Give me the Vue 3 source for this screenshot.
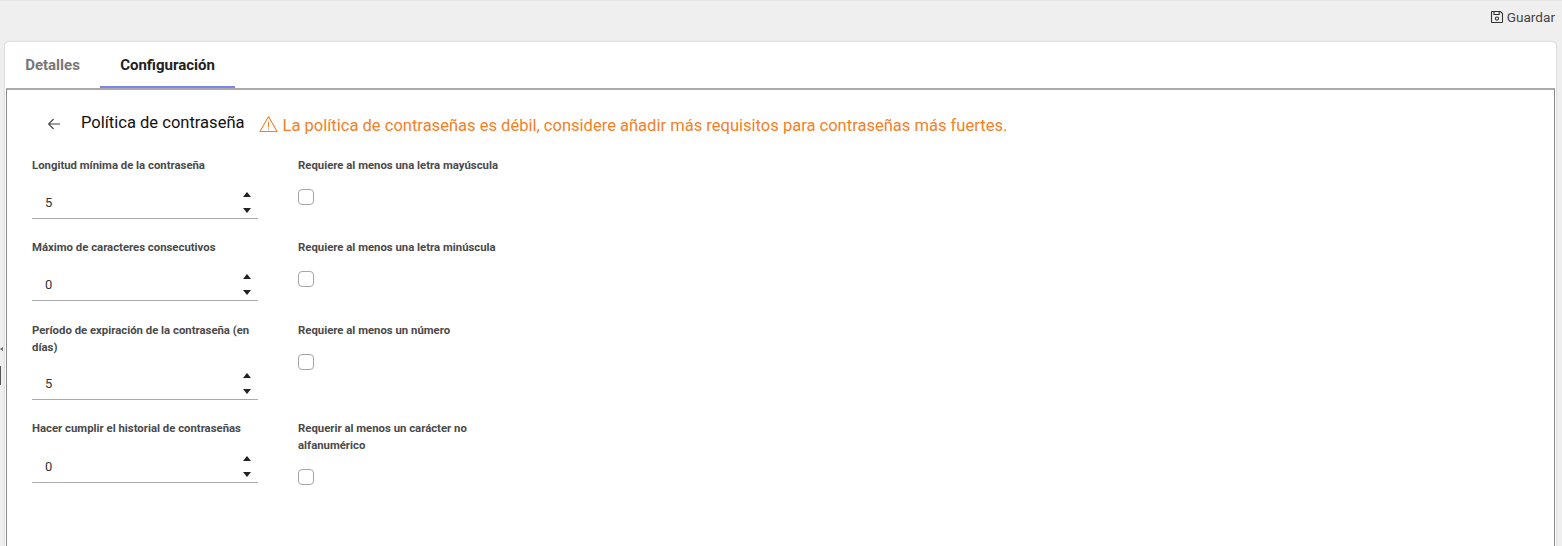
<script setup>
const numberFields = [
  { label: "Longitud mínima de la contraseña", value: 5 },
  { label: "Máximo de caracteres consecutivos", value: 0 },
  { label: "Período de expiración de la contraseña (en días)", value: 5 },
  { label: "Hacer cumplir el historial de contraseñas", value: 0 },
];

const checks = [
  "Requiere al menos una letra mayúscula",
  "Requiere al menos una letra minúscula",
  "Requiere al menos un número",
  "Requerir al menos un carácter no alfanumérico",
];
</script>

<template>
  <div class="page">
    <header class="topbar">
      <button class="save-btn" type="button">
        <svg class="save-icon" viewBox="0 0 14 14" width="14" height="14" fill="none" stroke="currentColor" stroke-width="1.1">
          <path d="M1.5 2.2a.7.7 0 0 1 .7-.7h8.2l2.1 2.1v8.2a.7.7 0 0 1-.7.7H2.2a.7.7 0 0 1-.7-.7z" />
          <path d="M4 1.7v2.8h5.2V1.7" />
          <circle cx="7" cy="8.6" r="1.6" />
        </svg>
        <span>Guardar</span>
      </button>
    </header>

    <section class="card">
      <nav class="tabs">
        <a class="tab">Detalles</a>
        <a class="tab active">Configuración</a>
      </nav>

      <div class="panel">
        <div class="title-row">
          <svg class="back" viewBox="0 0 14 14" width="14" height="14" fill="none" stroke="#444" stroke-width="1.1">
            <path d="M13 7H1.6M6.6 2 1.6 7l5 5" />
          </svg>
          <h2>Política de contraseña</h2>
          <svg class="warn" viewBox="0 0 20 18" width="19" height="18" fill="none" stroke="#f47f26" stroke-width="1.1" stroke-linejoin="round">
            <path d="M10 1.2 19 16.8H1z" />
            <path d="M10 6.5v6M10 13.8v1.2" />
          </svg>
          <span class="warning">La política de contraseñas es débil, considere añadir más requisitos para contraseñas más fuertes.</span>
        </div>

        <div class="form-grid">
          <template v-for="(field, i) in numberFields" :key="field.label">
            <div class="field">
              <label>{{ field.label }}</label>
              <div class="number-input" :class="{ last: i === 3 }">
                <span class="value">{{ field.value }}</span>
                <span class="spinner">
                  <i class="up" />
                  <i class="down" />
                </span>
              </div>
            </div>
            <div class="field">
              <label>{{ checks[i] }}</label>
              <span class="checkbox" />
            </div>
          </template>
        </div>
      </div>
    </section>

    <div class="side-handle">
      <i class="chev" />
      <i class="bar" />
    </div>
  </div>
</template>

<style scoped>
.page {
  position: relative;
  width: 1562px;
  height: 546px;
  overflow: hidden;
  background: #efefef;
  font-family: Roboto, "Liberation Sans", sans-serif;
  color: #222;
}

.topbar {
  height: 42px;
  box-sizing: border-box;
  display: flex;
  justify-content: flex-end;
  align-items: flex-start;
  padding: 9px 7px 0 0;
  border-top: 1px solid #e6e6e6;
}

.save-btn {
  display: flex;
  align-items: center;
  gap: 3px;
  height: 13px;
  padding: 0;
  border: none;
  background: none;
  color: #444;
  font-family: inherit;
  font-size: 13.6px;
}

.save-icon {
  color: #333;
}

.card {
  height: 504px;
  margin: 0 6px 0 5px;
  box-sizing: border-box;
  background: #fff;
  border-radius: 4px 4px 0 0;
  box-shadow: 0 0 2px rgba(0, 0, 0, 0.25);
}

.tabs {
  height: 46px;
  display: flex;
}

.tab {
  width: 95px;
  height: 46px;
  box-sizing: border-box;
  display: flex;
  align-items: center;
  justify-content: center;
  font-size: 15px;
  font-weight: 700;
  color: #777;
}

.tab.active {
  width: 135px;
  padding-top: 2px;
  color: #222;
  border-bottom: 2px solid #7a86e8;
}

.panel {
  height: 458px;
  box-sizing: border-box;
  margin: 0 1px;
  padding: 0 25px;
  border: 1px solid #8a8a8a;
  border-top: 2px solid #aaa;
  border-bottom: none;
}

.title-row {
  height: 67px;
  display: flex;
  align-items: flex-start;
  padding-top: 23px;
  box-sizing: border-box;
}

.back {
  margin: 4px 0 0 15px;
}

h2 {
  margin: 0 0 0 20px;
  font-size: 16.55px;
  line-height: 20px;
  font-weight: 400;
  color: #111;
}

.warn {
  margin: 2px 0 0 14px;
}

.warning {
  margin: 3px 0 0 5px;
  font-size: 16.55px;
  line-height: 20px;
  color: #f47f26;
}

.form-grid {
  display: grid;
  grid-template-columns: 226px 226px;
  grid-template-rows: 82px 83px 98px auto;
  column-gap: 40px;
}

.field {
  display: flex;
  flex-direction: column;
  align-items: flex-start;
}

label {
  font-size: 11.35px;
  line-height: 16.5px;
  font-weight: 700;
  color: #4a4a4a;
}

.number-input {
  width: 100%;
  height: 45px;
  box-sizing: border-box;
  display: flex;
  align-items: center;
  justify-content: space-between;
  padding: 13px 7px 0 13px;
  border-bottom: 1px solid #aaa;
}

.number-input.last {
  margin-top: 1.5px;
}

.value {
  font-size: 13px;
  color: #333;
}

.spinner {
  display: flex;
  flex-direction: column;
  gap: 11px;
}

.spinner i {
  width: 0;
  height: 0;
  border-left: 4px solid transparent;
  border-right: 4px solid transparent;
}

.spinner .up {
  border-bottom: 5px solid #222;
}

.spinner .down {
  border-top: 5px solid #222;
}

.checkbox {
  width: 16px;
  height: 16px;
  box-sizing: border-box;
  margin-top: 15.5px;
  border: 1px solid #a6a6a6;
  border-radius: 4px;
  background: #fff;
}

.side-handle {
  position: absolute;
  left: 0;
  top: 347px;
}

.side-handle i {
  display: block;
}

.chev {
  width: 0;
  height: 0;
  border-top: 2px solid transparent;
  border-bottom: 2px solid transparent;
  border-right: 3px solid #666;
}

.bar {
  width: 1px;
  height: 19px;
  margin-top: 15px;
  background: #555;
}
</style>
